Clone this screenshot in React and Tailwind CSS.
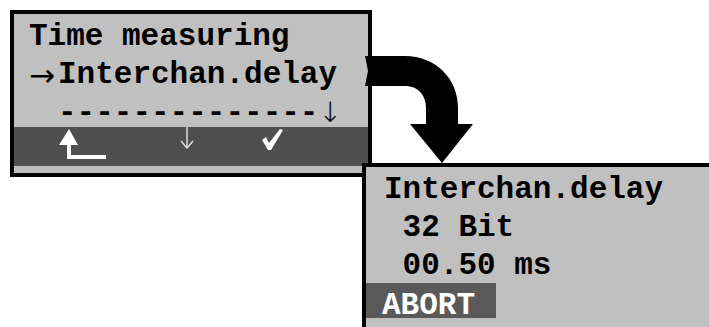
function ReturnIcon() {
    return (
        <svg width="47" height="34" viewBox="0 0 47 34" className="mt-[2px] shrink-0">
            <polygon points="10,0 0,16 19,16" fill="#ffffff" />
            <rect x="8" y="15" width="4" height="15" fill="#ffffff" />
            <rect x="8" y="26" width="39" height="4" fill="#ffffff" />
        </svg>
    );
}

function DownIcon() {
    return (
        <svg width="14" height="23" viewBox="0 0 14 23" className="shrink-0">
            <line x1="7" y1="0" x2="7" y2="21" stroke="#e6e6e6" strokeWidth="1.4" />
            <polyline points="1,14 7,21 13,14" fill="none" stroke="#e6e6e6" strokeWidth="1.4" />
        </svg>
    );
}

function CheckIcon() {
    return (
        <svg width="22" height="23" viewBox="0 0 22 23" className="mt-[1px] shrink-0">
            <polygon points="0,12 4,9 7,15 18,1 21,2 9,22 6,22" fill="#ffffff" />
        </svg>
    );
}

function BigArrow() {
    return (
        <svg width="709" height="327" viewBox="0 0 709 327" className="pointer-events-none absolute left-0 top-0 z-20">
            <path
                d="M365,56 L405,56 C435,56 458,78 458,108 L458,124 L473,124 L442,163 L410,124 L426,124 L426,108 C426,95 418,86 405,86 L365,86 L368,71 Z"
                fill="#000000"
            />
        </svg>
    );
}

export default function App() {
    const mono = { fontFamily: '"Liberation Mono", "Courier New", monospace' };
    const sym = { fontFamily: '"DejaVu Sans", sans-serif' };

    return (
        <div className="relative h-[327px] w-[709px] overflow-hidden bg-white" style={mono}>
            <div className="ml-[10px] mt-[10px] flex h-[167px] w-[362px] flex-col border-4 border-black bg-[#c0c0c0]">
                <div className="pl-[15px] pt-[4px] text-[31px] font-bold leading-[38px] text-black">
                    <div className="h-[38px] whitespace-pre">Time measuring</div>
                    <div className="flex h-[38px] whitespace-pre">
                        <span className="inline-block w-[29px] font-normal" style={sym}>
                            →
                        </span>
                        <span>Interchan.delay</span>
                    </div>
                    <div className="flex h-[33px] whitespace-pre">
                        <span className="inline-block w-[29px]"></span>
                        <span>--------------</span>
                        <span className="font-extralight text-[28px]" style={sym}>
                            ↓
                        </span>
                    </div>
                </div>
                <div className="flex h-[39px] items-start bg-[#4f4f4f] pl-[45px]">
                    <ReturnIcon />
                    <div className="ml-[74px]">
                        <DownIcon />
                    </div>
                    <div className="ml-[68px]">
                        <CheckIcon />
                    </div>
                </div>
            </div>

            <div className="relative z-10 ml-[362px] mt-[-14px] h-[200px] w-[400px] border-4 border-black bg-[#c0c0c0]">
                <div className="pl-[18px] pt-[4px] text-[31px] font-bold leading-[38px] text-black">
                    <div className="h-[38px] whitespace-pre">Interchan.delay</div>
                    <div className="h-[38px] whitespace-pre"> 32 Bit</div>
                    <div className="h-[36px] whitespace-pre"> 00.50 ms</div>
                </div>
                <div className="h-[35px] w-[130px] bg-[#595959] pl-[16px] pt-[5px] text-[31px] font-bold leading-[35px] text-white">
                    ABORT
                </div>
            </div>

            <BigArrow />
        </div>
    );
}
